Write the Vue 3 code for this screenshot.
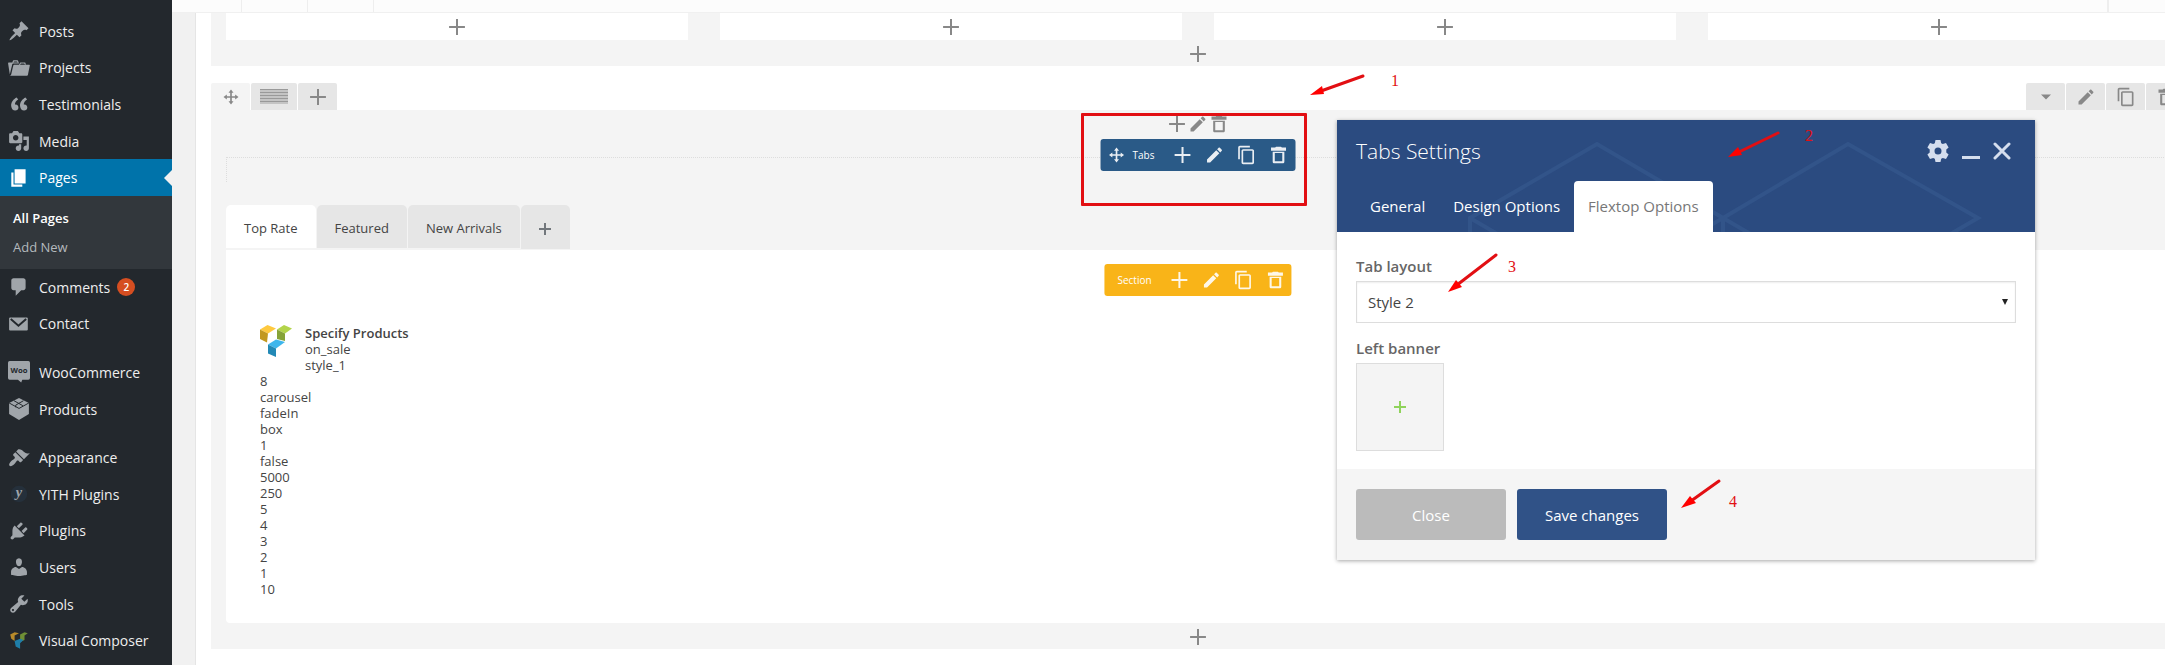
<script setup>
import { ref } from 'vue'

const paths = {
  pin: 'M10.44 3.02l1.82-1.82 6.36 6.35-1.83 1.82c-1.05-.68-2.48-.57-3.41.36l-.75.75c-.92.93-1.04 2.35-.35 3.41l-1.83 1.82-2.41-2.41-2.8 2.79c-.42.42-3.38 2.71-3.8 2.29s1.86-3.39 2.28-3.81l2.79-2.79L4.1 9.36l1.83-1.82c1.05.69 2.48.57 3.4-.36l.75-.75c.93-.92 1.05-2.35.36-3.41z',
  folder: 'M4 5H.78c-.37 0-.74.32-.69.84l1.56 9.99S3.5 8.47 3.86 6.7c.11-.53.61-.7.98-.7H10s-.7-2.08-.77-2.31C9.11 3.25 8.89 3 8.45 3H5.14c-.36 0-.7.23-.8.64C4.25 4.04 4 5 4 5zm4.88 0h-4s.42-1 .87-1h2.13c.48 0 1 1 1 1zM2.67 16.25c-.31.47-.76.75-1.26.75h15.73c.54 0 .92-.31 1.03-.83.44-2.19 1.68-8.44 1.68-8.44.07-.5-.3-.73-.62-.73H16V5.53c0-.16-.26-.53-.66-.53h-3.76c-.52 0-.87.58-.87.58L10 7H5.59c-.32 0-.63.19-.69.5 0 0-1.59 6.7-1.72 7.33-.07.37-.22.99-.51 1.42zM15.38 7H11s.58-1 1.13-1h2.29c.71 0 .96 1 .96 1z',
  quote: 'M9.49 13.22c0-.74-.2-1.38-.61-1.9-.62-.78-1.83-.88-2.53-.72-.29-1.65 1.11-3.75 2.92-4.65L7.88 4c-2.73 1.3-5.42 4.28-4.96 8.05C3.21 14.43 4.59 16 6.54 16c.85 0 1.56-.25 2.12-.75s.83-1.18.83-2.03zm8.05 0c0-.74-.2-1.38-.61-1.9-.63-.78-1.83-.88-2.53-.72-.29-1.65 1.11-3.75 2.92-4.65L15.93 4c-2.73 1.3-5.41 4.28-4.95 8.05.29 2.38 1.66 3.95 3.61 3.95.85 0 1.56-.25 2.12-.75s.83-1.18.83-2.03z',
  media: 'M13 11V4c0-.55-.45-1-1-1h-1.67L9 1H5L3.67 3H2c-.55 0-1 .45-1 1v7c0 .55.45 1 1 1h10c.55 0 1-.45 1-1zM7 4.5c1.38 0 2.5 1.12 2.5 2.5S8.38 9.5 7 9.5 4.5 8.38 4.5 7 5.62 4.5 7 4.5zM14 6h5v10.5c0 1.38-1.12 2.5-2.5 2.5S14 17.88 14 16.5s1.12-2.5 2.5-2.5c.17 0 .34.02.5.05V9h-3V6zm-4 8.05V13h2v3.5c0 1.38-1.12 2.5-2.5 2.5S7 17.88 7 16.5 8.12 14 9.5 14c.17 0 .34.02.5.05z',
  pages: 'M6 15V2h10v13H6zm-1 1h8v2H3V5h2v11z',
  comment: 'M5 2h9c1.1 0 2 .9 2 2v7c0 1.1-.9 2-2 2h-2l-5 5v-5H5c-1.1 0-2-.9-2-2V4c0-1.1.9-2 2-2z',
  brush: 'M14.48 11.06L7.41 3.99l1.5-1.5c.5-.56 2.3-.47 3.51.32 1.21.8 1.43 1.28 2.91 2.1 1.18.64 2.45 1.26 4.45.85zm-.71.71L6.7 4.7 4.93 6.47c-.39.39-.39 1.02 0 1.41l1.06 1.06c.39.39.39 1.03 0 1.42-.6.6-1.43 1.11-2.21 1.69-.35.26-.7.53-1.01.84C1.43 14.23.4 16.08 1.4 17.07c.99 1 2.84-.03 4.18-1.36.31-.31.58-.66.85-1.02.57-.78 1.08-1.61 1.69-2.21.39-.39 1.02-.39 1.41 0l1.06 1.06c.39.39 1.02.39 1.41 0z',
  plug: 'M13.11 4.36L9.87 7.6 8 5.73l3.24-3.24c.35-.34 1.05-.2 1.56.32.52.51.66 1.21.31 1.55zm-8 1.77l.91-1.12 9.01 9.01-1.19.84c-.71.71-2.63 1.16-3.82 1.16H6.14L4.9 17.26c-.59.59-1.54.59-2.12 0-.59-.58-.59-1.53 0-2.12l1.24-1.24v-3.88c0-1.13.4-3.19 1.09-3.89zm7.26 3.97l3.24-3.24c.34-.35 1.04-.21 1.55.31.52.51.66 1.21.31 1.55l-3.24 3.25z',
  user: 'M10 9.25c-2.27 0-2.73-3.44-2.73-3.44C7 4.02 7.82 2 9.97 2c2.16 0 2.98 2.02 2.71 3.81 0 0-.41 3.44-2.68 3.44zm0 2.57L12.72 10c2.39 0 4.52 2.33 4.52 4.53v2.49s-3.65 1.13-7.24 1.13c-3.65 0-7.24-1.13-7.24-1.13v-2.49c0-2.25 1.94-4.48 4.47-4.48z',
  wrench: 'M16.68 9.77c-1.34 1.34-3.3 1.67-4.95.99l-5.41 6.52c-.99.99-2.59.99-3.58 0s-.99-2.59 0-3.57l6.52-5.42c-.68-1.65-.35-3.61.99-4.95 1.28-1.28 3.12-1.62 4.72-1.06l-2.89 2.89 2.82 2.82 2.86-2.87c.53 1.58.18 3.39-1.08 4.65zM3.81 16.21c.4.39 1.04.39 1.43 0 .4-.4.4-1.04 0-1.43-.39-.4-1.03-.4-1.43 0-.39.39-.39 1.03 0 1.43z'
}

const tools = {
  move: 'M12 3l3 4h-2v4h4V9l4 3-4 3v-2h-4v4h2l-3 4-3-4h2v-4H7v2l-4-3 4-3v2h4V7H9z',
  plus: 'M10.8 2.500h2.400v8.300h8.300v2.400h-8.300v8.300h-2.400v-8.300H2.500v-2.400h8.300z',
  pencil: 'M3 17.25V21h3.75L17.81 9.94l-3.75-3.75L3 17.25zM20.71 7.04c.39-.39.39-1.02 0-1.41l-2.34-2.34c-.39-.39-1.02-.39-1.41 0l-1.83 1.83 3.75 3.75 1.83-1.83z',
  copy: 'M16 1H4c-1.1 0-2 .9-2 2v14h2V3h12V1zm3 4H8c-1.1 0-2 .9-2 2v14c0 1.1.9 2 2 2h11c1.1 0 2-.9 2-2V7c0-1.1-.9-2-2-2zm0 16H8V7h11v14z',
  trash: 'M9 2h6l1 1h5v4H3V3h5zM5 8h14v12c0 1.100-.9 2-2 2H7c-1.100 0-2-.9-2-2zM7.500 9.500v10h9v-10z',
  caret: 'M6 9h12l-6 6z'
}

const menu = [
  { label: 'Posts', icon: 'pin' },
  { label: 'Projects', icon: 'folder' },
  { label: 'Testimonials', icon: 'quote' },
  { label: 'Media', icon: 'media' },
  { label: 'Pages', icon: 'pages', current: true },
  { label: 'Comments', icon: 'comment', badge: 2 },
  { label: 'Contact', icon: 'mail' },
  { label: 'WooCommerce', icon: 'woo', gap: true },
  { label: 'Products', icon: 'box' },
  { label: 'Appearance', icon: 'brush', gap: true },
  { label: 'YITH Plugins', icon: 'yith' },
  { label: 'Plugins', icon: 'plug' },
  { label: 'Users', icon: 'user' },
  { label: 'Tools', icon: 'wrench' },
  { label: 'Visual Composer', icon: 'vc' }
]

const params = ['8', 'carousel', 'fadeIn', 'box', '1', 'false', '5000', '250', '5', '4', '3', '2', '1', '10']
const sections = ['Top Rate', 'Featured', 'New Arrivals']
const activeSection = ref('Top Rate')
const rowTools = ['caret', 'pencil', 'copy', 'trash']
const elementTools = ['plus', 'pencil', 'copy', 'trash']
const panelTabs = ['General', 'Design Options', 'Flextop Options']
const activeTab = ref('Flextop Options')
const layout = ref('Style 2')
</script>

<template>
  <div class="page">
    <nav class="sidebar">
      <template v-for="item in menu" :key="item.label">
        <a href="#" class="item" :class="{ current: item.current, gap: item.gap }">
          <svg class="menu-icon" viewBox="0 0 20 20" aria-hidden="true">
            <path v-if="paths[item.icon]" :d="paths[item.icon]" fill="currentColor" fill-rule="evenodd" />
            <g v-else-if="item.icon === 'mail'">
              <rect x="1" y="4" width="17" height="12" rx="1" fill="currentColor" />
              <path d="M2.500 5.500l7 6 7-6" fill="none" stroke="#23282d" stroke-width="1.800" />
            </g>
            <g v-else-if="item.icon === 'woo'">
              <path d="M1.500 0h17Q20 0 20 1.500v14q0 1.500-1.500 1.500H13l-1 2.500L9 17H1.500Q0 17 0 15.500v-14Q0 0 1.500 0z" fill="currentColor" />
              <text x="10" y="11" text-anchor="middle" class="woo">Woo</text>
            </g>
            <g v-else-if="item.icon === 'box'">
              <path d="M10 0l9 4.500v10L10 20l-9-5.500v-10z" fill="currentColor" />
              <path d="M1 4.500L10 9.500l9-5M5.500 2.500l8 4.500M14 2.500L7 6.500v2" fill="none" stroke="#23282d" stroke-width=".9" />
            </g>
            <g v-else-if="item.icon === 'yith'">
              <circle cx="10" cy="10" r="7.500" fill="#25303b" />
              <text x="10" y="13" text-anchor="middle" class="yith">y</text>
            </g>
            <g v-else>
              <path d="M2 4l4-2 4 1-4 2v5L3 8z" fill="#b78a2a" />
              <path d="M11 4l4-2 3 1-3 2v4l-4 2z" fill="#6f8f35" />
              <path d="M6 10l5-2 3 1-3 3v5l-4-2z" fill="#1f7ea8" />
            </g>
          </svg>
          <span>{{ item.label }}</span>
          <span v-if="item.badge" class="badge">{{ item.badge }}</span>
        </a>
        <div v-if="item.current" class="submenu">
          <a href="#" class="on">All Pages</a>
          <a href="#">Add New</a>
        </div>
      </template>
    </nav>

    <main class="main">
      <div class="toolbar"><i></i><i></i><i></i><i class="far"></i></div>
      <div class="panel">
        <div class="builder">
          <section class="row">
            <div class="columns">
              <button v-for="n in 4" :key="n" class="column" aria-label="Add element">
                <svg class="tool" viewBox="0 0 24 24"><path :d="tools.plus" /></svg>
              </button>
            </div>
            <button class="append" aria-label="Append">
              <svg class="tool" viewBox="0 0 24 24"><path :d="tools.plus" /></svg>
            </button>
          </section>

          <div class="row-controls">
            <button class="control light" aria-label="Move row">
              <svg class="tool" viewBox="0 0 24 24"><path :d="tools.move" /></svg>
            </button>
            <button class="control wide" aria-label="Row layout"><span class="stripes"></span></button>
            <button class="control" aria-label="Add column">
              <svg class="tool" viewBox="0 0 24 24"><path :d="tools.plus" /></svg>
            </button>
            <span class="spacer"></span>
            <button v-for="t in rowTools" :key="t" class="control" :aria-label="t">
              <svg class="tool" viewBox="0 0 24 24"><path :d="tools[t]" fill-rule="evenodd" /></svg>
            </button>
          </div>

          <section class="row tabs-row">
            <div class="row-body">
              <div class="outline"></div>
              <div class="tabs">
                <button
                  v-for="s in sections"
                  :key="s"
                  class="tab"
                  :class="{ active: s === activeSection }"
                  @click="activeSection = s"
                >{{ s }}</button>
                <button class="tab add" aria-label="Add section">
                  <svg class="small-tool" viewBox="0 0 12 12"><path d="M5 0h2v5h5v2H7v5H5V7H0V5h5z" /></svg>
                </button>
              </div>
              <div class="content">
                <div class="product">
                  <svg class="logo" viewBox="0 0 33 33" aria-hidden="true">
                    <path d="M0 4.500L7.500 0 16 3.500l-8 5z" fill="#fec93f" />
                    <path d="M0 4.500l8 4-1 9L0 14z" fill="#c2981f" />
                    <path d="M17 4.500L24 0l8 3.500-7 5z" fill="#b3d44b" />
                    <path d="M17 4.500l8 4V16l-8-2z" fill="#86a338" />
                    <path d="M8 19.500l8-5 9 2.500-9 6.500z" fill="#3eb6ec" />
                    <path d="M8 19.500l8 4V32l-8-3.500z" fill="#2289b6" />
                  </svg>
                  <div>
                    <strong>Specify Products</strong>
                    <div>on_sale</div>
                    <div>style_1</div>
                  </div>
                </div>
                <div v-for="(p, i) in params" :key="i">{{ p }}</div>
              </div>
            </div>
            <button class="append" aria-label="Append">
              <svg class="tool" viewBox="0 0 24 24"><path :d="tools.plus" /></svg>
            </button>

            <div class="hover-tools">
              <svg v-for="t in ['plus', 'pencil', 'trash']" :key="t" class="tool" viewBox="0 0 24 24">
                <path :d="tools[t]" fill-rule="evenodd" />
              </svg>
            </div>
            <div class="element-bar blue">
              <svg class="tool" viewBox="0 0 24 24"><path :d="tools.move" /></svg>
              <span class="bar-name">Tabs</span>
              <button v-for="t in elementTools" :key="t" :aria-label="t">
                <svg class="tool" viewBox="0 0 24 24"><path :d="tools[t]" fill-rule="evenodd" /></svg>
              </button>
            </div>
            <div class="element-bar yellow">
              <span class="bar-name">Section</span>
              <button v-for="t in elementTools" :key="t" :aria-label="t">
                <svg class="tool" viewBox="0 0 24 24"><path :d="tools[t]" fill-rule="evenodd" /></svg>
              </button>
            </div>
            <div class="frame"></div>
            <svg class="marks first" width="110" height="50" aria-hidden="true">
              <path d="M58 9L16 24" class="shaft" />
              <path d="M5 28l12-9 2 8z" class="head" />
              <text x="90" y="19">1</text>
            </svg>
          </section>
        </div>
      </div>
    </main>

    <section class="dialog" aria-label="Tabs Settings">
      <header class="dialog-head">
        <svg class="pattern" width="698" height="112" aria-hidden="true">
          <path d="M133 130V98L260 24L386 98V130M133 98L188 130M386 98L331 130M386 98L511 24L641 98L586 130M386 98L441 130" />
        </svg>
        <div class="title-line">
          <h2>Tabs Settings</h2>
          <button aria-label="Settings">
            <svg width="22" height="22" viewBox="0 0 22 22">
              <path
                fill-rule="evenodd"
                d="M8.500 0h5l.7 3.300 1.600.8 3.200-1.100 2.600 4.400-2.300 2.100v3l2.300 2.100-2.600 4.400-3.200-1.100-1.600.8-.7 3.300h-5l-.7-3.300-1.600-.8L3 19 .4 14.600l2.300-2.100v-3L.4 7.400 3 3l3.200 1.100 1.600-.8zM11 7.500a3.500 3.500 0 100 7 3.500 3.500 0 000-7z"
              />
            </svg>
          </button>
          <button aria-label="Minimize">
            <svg width="18" height="22" viewBox="0 0 18 22"><path d="M0 16h18v3H0z" /></svg>
          </button>
          <button aria-label="Close panel">
            <svg width="18" height="22" viewBox="0 0 18 22"><path d="M2 4l14 14M16 4L2 18" class="cross" /></svg>
          </button>
        </div>
        <div class="dialog-tabs">
          <button
            v-for="t in panelTabs"
            :key="t"
            :class="{ active: t === activeTab }"
            @click="activeTab = t"
          >{{ t }}</button>
        </div>
      </header>
      <div class="dialog-body">
        <label for="tab-layout">Tab layout</label>
        <div class="select-wrap">
          <select id="tab-layout" v-model="layout">
            <option>Style 1</option>
            <option>Style 2</option>
          </select>
          <svg class="select-arrow" width="6" height="6" viewBox="0 0 6 6"><path d="M0 0h6L3 6z" /></svg>
        </div>
        <label for="left-banner">Left banner</label>
        <button id="left-banner" class="banner" aria-label="Add image">
          <svg class="small-tool" viewBox="0 0 12 12"><path d="M5 0h2v5h5v2H7v5H5V7H0V5h5z" /></svg>
        </button>
      </div>
      <footer class="dialog-foot">
        <button class="close">Close</button>
        <button class="save">Save changes</button>
      </footer>
      <svg class="marks over" width="698" height="440" aria-hidden="true">
        <path d="M441 13L402 32" class="shaft" />
        <path d="M391 37l10-10 4 8z" class="head" />
        <text x="472" y="21">2</text>
        <path d="M159 135L120 165" class="shaft" />
        <path d="M111 172l8-12 6 7z" class="head" />
        <text x="175" y="152">3</text>
        <path d="M382 361L354 381" class="shaft" />
        <path d="M344 388l9-12 6 7z" class="head" />
        <text x="396" y="387">4</text>
      </svg>
    </section>
  </div>
</template>

<style>
body {
  margin: 0;
}
</style>

<style scoped>
.page {
  position: relative;
  display: flex;
  min-height: 100vh;
  overflow: hidden;
  background: #f1f1f1;
  color: #444;
  font-family: "Open Sans", "Noto Sans", sans-serif;
  font-size: 13px;
}
button {
  display: flex;
  align-items: center;
  justify-content: center;
  margin: 0;
  padding: 0;
  border: 0;
  background: none;
  color: inherit;
  font: inherit;
}
svg {
  display: block;
  flex: none;
}

.sidebar {
  display: flex;
  flex: none;
  flex-direction: column;
  box-sizing: border-box;
  width: 172px;
  padding: 13px 0 6px;
  background: #23282d;
  font-size: 14px;
}
.item {
  position: relative;
  display: flex;
  flex: 1 0 auto;
  align-items: center;
  gap: 9px;
  min-height: 36px;
  padding-left: 8px;
  color: #eee;
  text-decoration: none;
}
.item.gap {
  margin-top: 12px;
}
.menu-icon {
  width: 22px;
  height: 22px;
  color: #a0a5aa;
}
.item.current {
  background: #0073aa;
  color: #fff;
}
.item.current .menu-icon {
  color: #fff;
}
.item.current::after {
  position: absolute;
  top: 50%;
  right: 0;
  margin-top: -8px;
  border: 8px solid transparent;
  border-left: 0;
  border-right-color: #f1f1f1;
  content: "";
}
.badge {
  width: 18px;
  border-radius: 9px;
  background: #d54e21;
  color: #fff;
  font-size: 10px;
  font-weight: 600;
  line-height: 18px;
  text-align: center;
  margin-left: -2px;
}
.submenu {
  display: flex;
  flex: none;
  flex-direction: column;
  padding: 8px 0 7px 13px;
  background: #32373c;
  font-size: 13px;
  line-height: 29px;
}
.submenu a {
  color: #b4b9be;
  text-decoration: none;
}
.submenu .on {
  color: #fff;
  font-weight: 600;
}
.woo {
  fill: #23282d;
  font-family: "Open Sans", sans-serif;
  font-size: 7px;
  font-weight: 700;
}
.yith {
  fill: #a0a5aa;
  font-family: "Liberation Serif", serif;
  font-size: 13px;
  font-style: italic;
  font-weight: 700;
}

.main {
  display: flex;
  flex: 1;
  flex-direction: column;
  min-width: 0;
}
.toolbar {
  display: flex;
  gap: 65px;
  height: 12px;
  padding: 0 56px 0 69px;
  border-bottom: 1px solid #f0f0f0;
  background: #fcfcfc;
}
.toolbar i {
  width: 1px;
  background: #eee;
}
.toolbar .far {
  width: 2px;
  margin-left: auto;
}
.panel {
  flex: 1;
  margin-left: 23px;
  padding-left: 15px;
  border-left: 1px solid #e5e5e5;
  background: #fff;
}
.builder {
  margin-right: -20px;
}
.row {
  position: relative;
  background: #f4f4f4;
}
.columns {
  display: grid;
  grid-template-columns: repeat(4, 1fr);
  gap: 32px;
  padding: 0 15px;
}
.column {
  height: 27px;
  background: #fff;
}
.append {
  width: 100%;
  height: 26px;
  padding-top: 2px;
}
.tool {
  width: 20px;
  height: 20px;
  fill: #888;
}
.row-controls {
  display: flex;
  gap: 1px;
  margin-top: 17px;
}
.control {
  width: 39px;
  height: 27px;
  border-radius: 2px 2px 0 0;
  background: #e6e6e6;
}
.control.light {
  background: #f4f4f4;
}
.control.wide {
  width: 46px;
}
.spacer {
  flex: 1;
}
.stripes {
  width: 28px;
  height: 15px;
  background: repeating-linear-gradient(#999 0 1px, #c4c4c4 1px 3px);
}
.row-body {
  padding: 47px 15px 0;
}
.outline {
  height: 24px;
  border-top: 1px dotted #ddd;
  border-left: 1px dotted #ddd;
}
.tabs {
  display: flex;
  align-items: flex-start;
  gap: 1px;
  height: 45px;
  margin-top: 23px;
}
.tab {
  height: 43px;
  padding: 3px 18px 0;
  border-radius: 5px 5px 0 0;
  background: #e6e6e6;
}
.tab.active {
  background: #fff;
}
.tab.add {
  width: 49px;
  height: 44px;
}
.small-tool {
  width: 12px;
  height: 12px;
  fill: #72777c;
}
.content {
  padding: 75px 34px 26px;
  border-radius: 0 0 4px 4px;
  background: #fff;
  line-height: 16px;
}
.product {
  display: flex;
  gap: 12px;
}
.product strong {
  font-weight: 600;
}
.logo {
  width: 33px;
  height: 33px;
}

.hover-tools,
.element-bar,
.frame {
  position: absolute;
  left: 50%;
  display: flex;
  align-items: center;
  transform: translateX(-50%);
}
.hover-tools {
  top: 4px;
  gap: 1px;
}
.element-bar {
  height: 32px;
  border-radius: 3px;
  color: #fff;
  font-size: 10px;
}
.element-bar .tool {
  fill: #fff;
  opacity: .9;
}
.element-bar button {
  width: 32px;
  height: 32px;
}
.bar-name {
  padding: 0 12px 0 6px;
}
.blue {
  top: 29px;
  padding: 0 1px 0 6px;
  background: #2a5a87;
}
.yellow {
  top: 154px;
  padding: 0 0 0 7px;
  background: #f9b418;
}
.frame {
  top: 3px;
  box-sizing: border-box;
  width: 226px;
  height: 93px;
  margin-left: -4px;
  border: 3px solid #e20f13;
  border-radius: 1px;
}
.marks {
  position: absolute;
  pointer-events: none;
}
.marks text {
  fill: #e20f13;
  font-family: "Liberation Serif", serif;
  font-size: 16px;
  text-anchor: middle;
}
.shaft {
  stroke: #e20f13;
  stroke-width: 3;
  stroke-linecap: round;
}
.head {
  fill: #f00;
}
.first {
  top: -43px;
  left: calc(50% + 107px);
}
.over {
  top: 0;
  left: 0;
}

.dialog {
  position: absolute;
  top: 120px;
  right: 130px;
  width: 698px;
  background: #fff;
  box-shadow: 0 1px 4px rgba(0, 0, 0, .35);
  color: #666;
  font-size: 15px;
}
.dialog-head {
  position: relative;
  display: flex;
  flex-direction: column;
  height: 112px;
  background: #2b4b80;
  color: #fff;
}
.pattern {
  position: absolute;
  inset: 0;
  fill: none;
  stroke: #325489;
  stroke-width: 4;
}
.title-line {
  position: relative;
  display: flex;
  align-items: center;
  gap: 13px;
  height: 61px;
  padding: 0 24px 0 19px;
}
.title-line h2 {
  flex: 1;
  margin: 0;
  font-size: 21px;
  font-weight: 300;
}
.title-line svg {
  fill: #d5deee;
}
.cross {
  stroke: #d5deee;
  stroke-width: 3;
  stroke-linecap: round;
}
.dialog-tabs {
  position: relative;
  display: flex;
  flex: 1;
  padding-left: 19px;
}
.dialog-tabs button {
  padding: 0 14px 1px;
  border-radius: 4px 4px 0 0;
}
.dialog-tabs .active {
  background: #fff;
  color: #777;
}
.dialog-body {
  display: flex;
  flex-direction: column;
  padding: 24px 19px 18px;
}
.dialog-body label {
  margin-bottom: 4px;
  font-weight: 600;
  line-height: 21px;
}
.select-wrap {
  position: relative;
  margin-bottom: 15px;
}
.select-wrap select {
  display: block;
  box-sizing: border-box;
  width: 100%;
  height: 42px;
  padding: 0 11px;
  border: 1px solid #ddd;
  border-radius: 0;
  background: #fff;
  box-shadow: inset 0 1px 2px rgba(0, 0, 0, .07);
  color: #444;
  font: inherit;
  appearance: none;
}
.select-arrow {
  position: absolute;
  top: 18px;
  right: 8px;
  fill: #222;
}
.banner {
  box-sizing: border-box;
  width: 88px;
  height: 88px;
  border: 1px solid #ddd;
  background: #f4f4f4;
}
.banner .small-tool {
  fill: #8fd35b;
}
.dialog-foot {
  display: flex;
  gap: 11px;
  padding: 20px 19px;
  background: #f5f5f5;
}
.dialog-foot button {
  width: 150px;
  height: 51px;
  border-radius: 3px;
  color: #fff;
}
.dialog-foot .close {
  background: #bbb;
}
.dialog-foot .save {
  background: #305287;
}
</style>
